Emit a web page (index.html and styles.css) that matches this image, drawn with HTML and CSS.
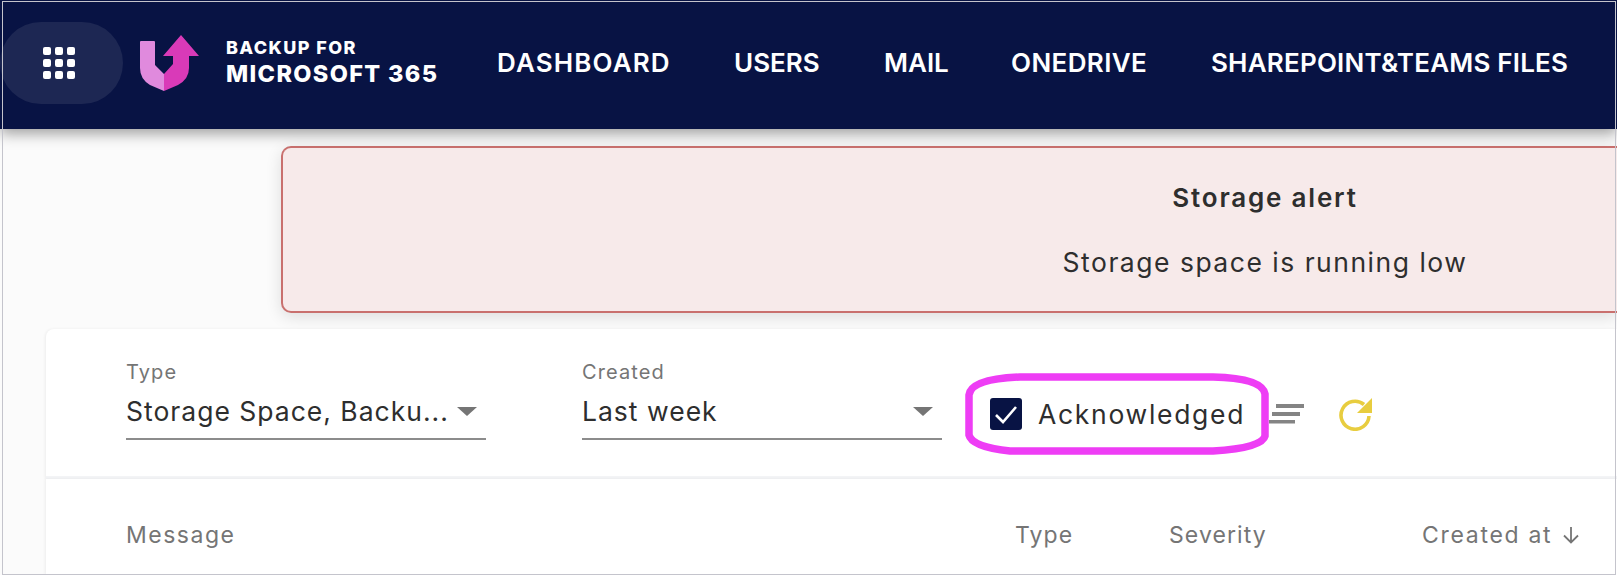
FILE: index.html
```html
<!DOCTYPE html>
<html>

<head>
  <meta charset="utf-8">
  <title>Backup for Microsoft 365</title>
  <link rel="stylesheet" href="styles.css">
</head>

<body>
  <!-- top bar -->
  <div class="topbar">
    <div class="apps-btn">
      <svg width="32" height="32" viewBox="0 0 32 32" fill="#fff">
        <rect x="0" y="0" width="8" height="8" rx="2"/><rect x="12" y="0" width="8" height="8" rx="2"/><rect x="24" y="0" width="8" height="8" rx="2"/>
        <rect x="0" y="12" width="8" height="8" rx="2"/><rect x="12" y="12" width="8" height="8" rx="2"/><rect x="24" y="12" width="8" height="8" rx="2"/>
        <rect x="0" y="24" width="8" height="8" rx="2"/><rect x="12" y="24" width="8" height="8" rx="2"/><rect x="24" y="24" width="8" height="8" rx="2"/>
      </svg>
    </div>
    <svg class="logo-mark" width="60" height="57" viewBox="0 0 60 57">
      <path fill="#e08add" d="M0 7Q0 6 1 6H14Q15 6 15 7V30L24 39V56L10 50Q0 44 0 33Z"/>
      <path fill="#d93ab8" d="M24 39L33 29V21H23L41 0L59 21H49V33Q49 44 38 50L24 56Z"/>
    </svg>
    <div class="logo-text">
      <div class="logo-small">BACKUP FOR</div>
      <div class="logo-big">MICROSOFT 365</div>
    </div>
    <div class="nav">
      <a class="nav-dashboard">DASHBOARD</a>
      <a class="nav-users">USERS</a>
      <a class="nav-mail">MAIL</a>
      <a class="nav-onedrive">ONEDRIVE</a>
      <a class="nav-files">SHAREPOINT&amp;TEAMS FILES</a>
    </div>
  </div>

  <div class="alert">
    <div class="alert-title">Storage alert</div>
    <div class="alert-msg">Storage space is running low</div>
  </div>

  <!-- filters -->
  <div class="card filters">
    <div class="field">
      <div class="field-label">Type</div>
      <div class="field-value">Storage Space, Backu...<span class="caret"></span></div>
    </div>
    <div class="field">
      <div class="field-label">Created</div>
      <div class="field-value">Last week<span class="caret"></span></div>
    </div>
    <div class="ack">
      <span class="checkbox">
        <svg width="32" height="32" viewBox="0 0 32 32"><path d="M6 17L13 24L26 9" fill="none" stroke="#fff" stroke-width="2.6"/></svg>
      </span>
      <span class="ack-text">Acknowledged</span>
    </div>
    <svg class="filter-icon" width="35" height="20" viewBox="0 0 35 20" fill="#848484">
      <rect x="7" y="0" width="28" height="4"/>
      <rect x="3" y="8" width="28" height="4"/>
      <rect x="0" y="16" width="26" height="3.5"/>
    </svg>
    <svg class="refresh-icon" width="34" height="34" viewBox="0 0 34 34">
      <path d="M25 7.500A14 14 0 1 0 30 19" fill="none" stroke="#e8cd3f" stroke-width="3.6"/>
      <path d="M33 1V16H18Z" fill="#e8cd3f"/>
    </svg>
  </div>

  <!-- table -->
  <div class="card table-head">
    <div class="col-message">Message</div>
    <div class="col-type">Type</div>
    <div class="col-severity">Severity</div>
    <div class="col-created">Created at
      <svg width="18" height="18" viewBox="0 0 18 18"><path d="M9 1V16M2 9.500L9 16.500L16 9.500" fill="none" stroke="#757575" stroke-width="1.800"/></svg>
    </div>
  </div>

  <!-- hand drawn marker ring over the checkbox -->
  <svg class="ring" width="315" height="92" viewBox="0 0 315 92">
    <path d="M60 9L253 9Q302 10 305 26V68Q302 80 253 83H50Q12 79 9 67V27Q11 11 60 9Z" fill="none" stroke="#ee3df5" stroke-width="7.500"/>
  </svg>
  <div class="frame"></div>
</body>

</html>
```

FILE: styles.css
```css
html, body {
  margin: 0;
  height: 575px;
  overflow: hidden;
}

body {
  position: relative;
  width: 1617px;
  background: #fbfbfb;
  color: #2e2e2e;
  font-family: Inter, "Open Sans", sans-serif;
}

.topbar {
  position: relative;
  display: flex;
  align-items: center;
  height: 129px;
  background: #081344;
  box-shadow: 0 4px 14px rgba(0, 0, 0, .4);
  color: #fff;
}

.apps-btn {
  display: flex;
  align-items: center;
  justify-content: center;
  align-self: flex-start;
  width: 118px;
  height: 82px;
  margin-top: 22px;
  padding-right: 5px;
  border-radius: 41px;
  background: #1d2753;
}

.logo-mark {
  margin-left: 17px;
  margin-top: -2px;
}

.logo-text {
  width: 271px;
  margin-left: 26px;
  margin-top: -4px;
  font-weight: 800;
}

.logo-small {
  font-size: 18px;
  letter-spacing: 1.400px;
  line-height: 22px;
}

.logo-big {
  font-size: 23.500px;
  letter-spacing: 1.350px;
  line-height: 30px;
}

.nav {
  display: flex;
  margin-top: -4px;
  font-size: 26px;
  font-weight: 600;
  letter-spacing: 0;
}

.nav a {
  white-space: nowrap;
}

.nav-dashboard {
  width: 237px;
  letter-spacing: 1.150px;
}

.nav-users {
  width: 150px;
}

.nav-mail {
  width: 127px;
}

.nav-onedrive {
  width: 200px;
  letter-spacing: .4px;
}

.nav-files {
  letter-spacing: .2px;
}

.alert {
  box-sizing: border-box;
  width: 1336px;
  height: 167px;
  margin: 17px 0 16px 281px;
  padding-left: 630px;
  border: 2px solid #c9706e;
  border-right: 0;
  border-radius: 10px 0 0 10px;
  background: #f7eaea;
  box-shadow: 0 4px 16px rgba(0, 0, 0, .12);
  text-align: center;
}

.alert-title {
  margin-top: 32px;
  font-size: 26px;
  font-weight: 600;
  letter-spacing: 1.800px;
  line-height: 36px;
}

.alert-msg {
  margin-top: 28px;
  font-size: 26.500px;
  letter-spacing: 1.500px;
  line-height: 36px;
  white-space: nowrap;
}

.card {
  display: flex;
  box-sizing: border-box;
  width: 1571px;
  margin-left: 46px;
  background: #fff;
  box-shadow: -1px 0 3px rgba(0, 0, 0, .06);
}

.filters {
  height: 150px;
  padding: 32px 0 0 80px;
  border-bottom: 3px solid #f3f4f6;
  border-radius: 8px 0 0 0;
}

.field {
  width: 360px;
  height: 77px;
  margin-right: 96px;
  border-bottom: 2px solid #8c8c8c;
  box-sizing: content-box;
}

.field:nth-child(2) {
  margin-right: 48px;
}

.field-label {
  color: #757575;
  font-size: 20px;
  letter-spacing: 1.100px;
  line-height: 22px;
}

.field-value {
  display: flex;
  justify-content: space-between;
  align-items: center;
  margin-top: 13px;
  padding-right: 9px;
  font-size: 26.500px;
  letter-spacing: 1px;
  line-height: 30px;
  white-space: nowrap;
}

.caret {
  width: 0;
  height: 0;
  border-left: 10px solid transparent;
  border-right: 10px solid transparent;
  border-top: 9px solid #757575;
}

.ack {
  display: flex;
  align-items: center;
  margin-top: 37px;
  height: 32px;
}

.checkbox {
  display: block;
  width: 32px;
  height: 32px;
  margin-right: 16px;
  border-radius: 3px;
  background: #081344;
}

.ack-text {
  width: 207px;
  font-size: 26.500px;
  letter-spacing: 1.700px;
  white-space: nowrap;
}

.filter-icon {
  margin: 43px 0 0 24px;
}

.refresh-icon {
  margin: 36px 0 0 35px;
}

.table-head {
  height: 96px;
  padding: 42px 0 0 80px;
  color: #757575;
  font-size: 23px;
  letter-spacing: 1.100px;
  line-height: 28px;
  white-space: nowrap;
}

.col-message {
  width: 889px;
  letter-spacing: 1.500px;
}

.col-type {
  width: 154px;
}

.col-severity {
  width: 253px;
}

.col-created {
  display: flex;
  align-items: center;
  align-self: flex-start;
  gap: 10px;
  letter-spacing: 1.700px;
}

.ring {
  position: absolute;
  left: 960px;
  top: 368px;
}

.frame {
  position: absolute;
  left: 2px;
  top: 1px;
  right: 1px;
  bottom: 0;
  border: 1px solid #c4c4cc;
  pointer-events: none;
}
```
